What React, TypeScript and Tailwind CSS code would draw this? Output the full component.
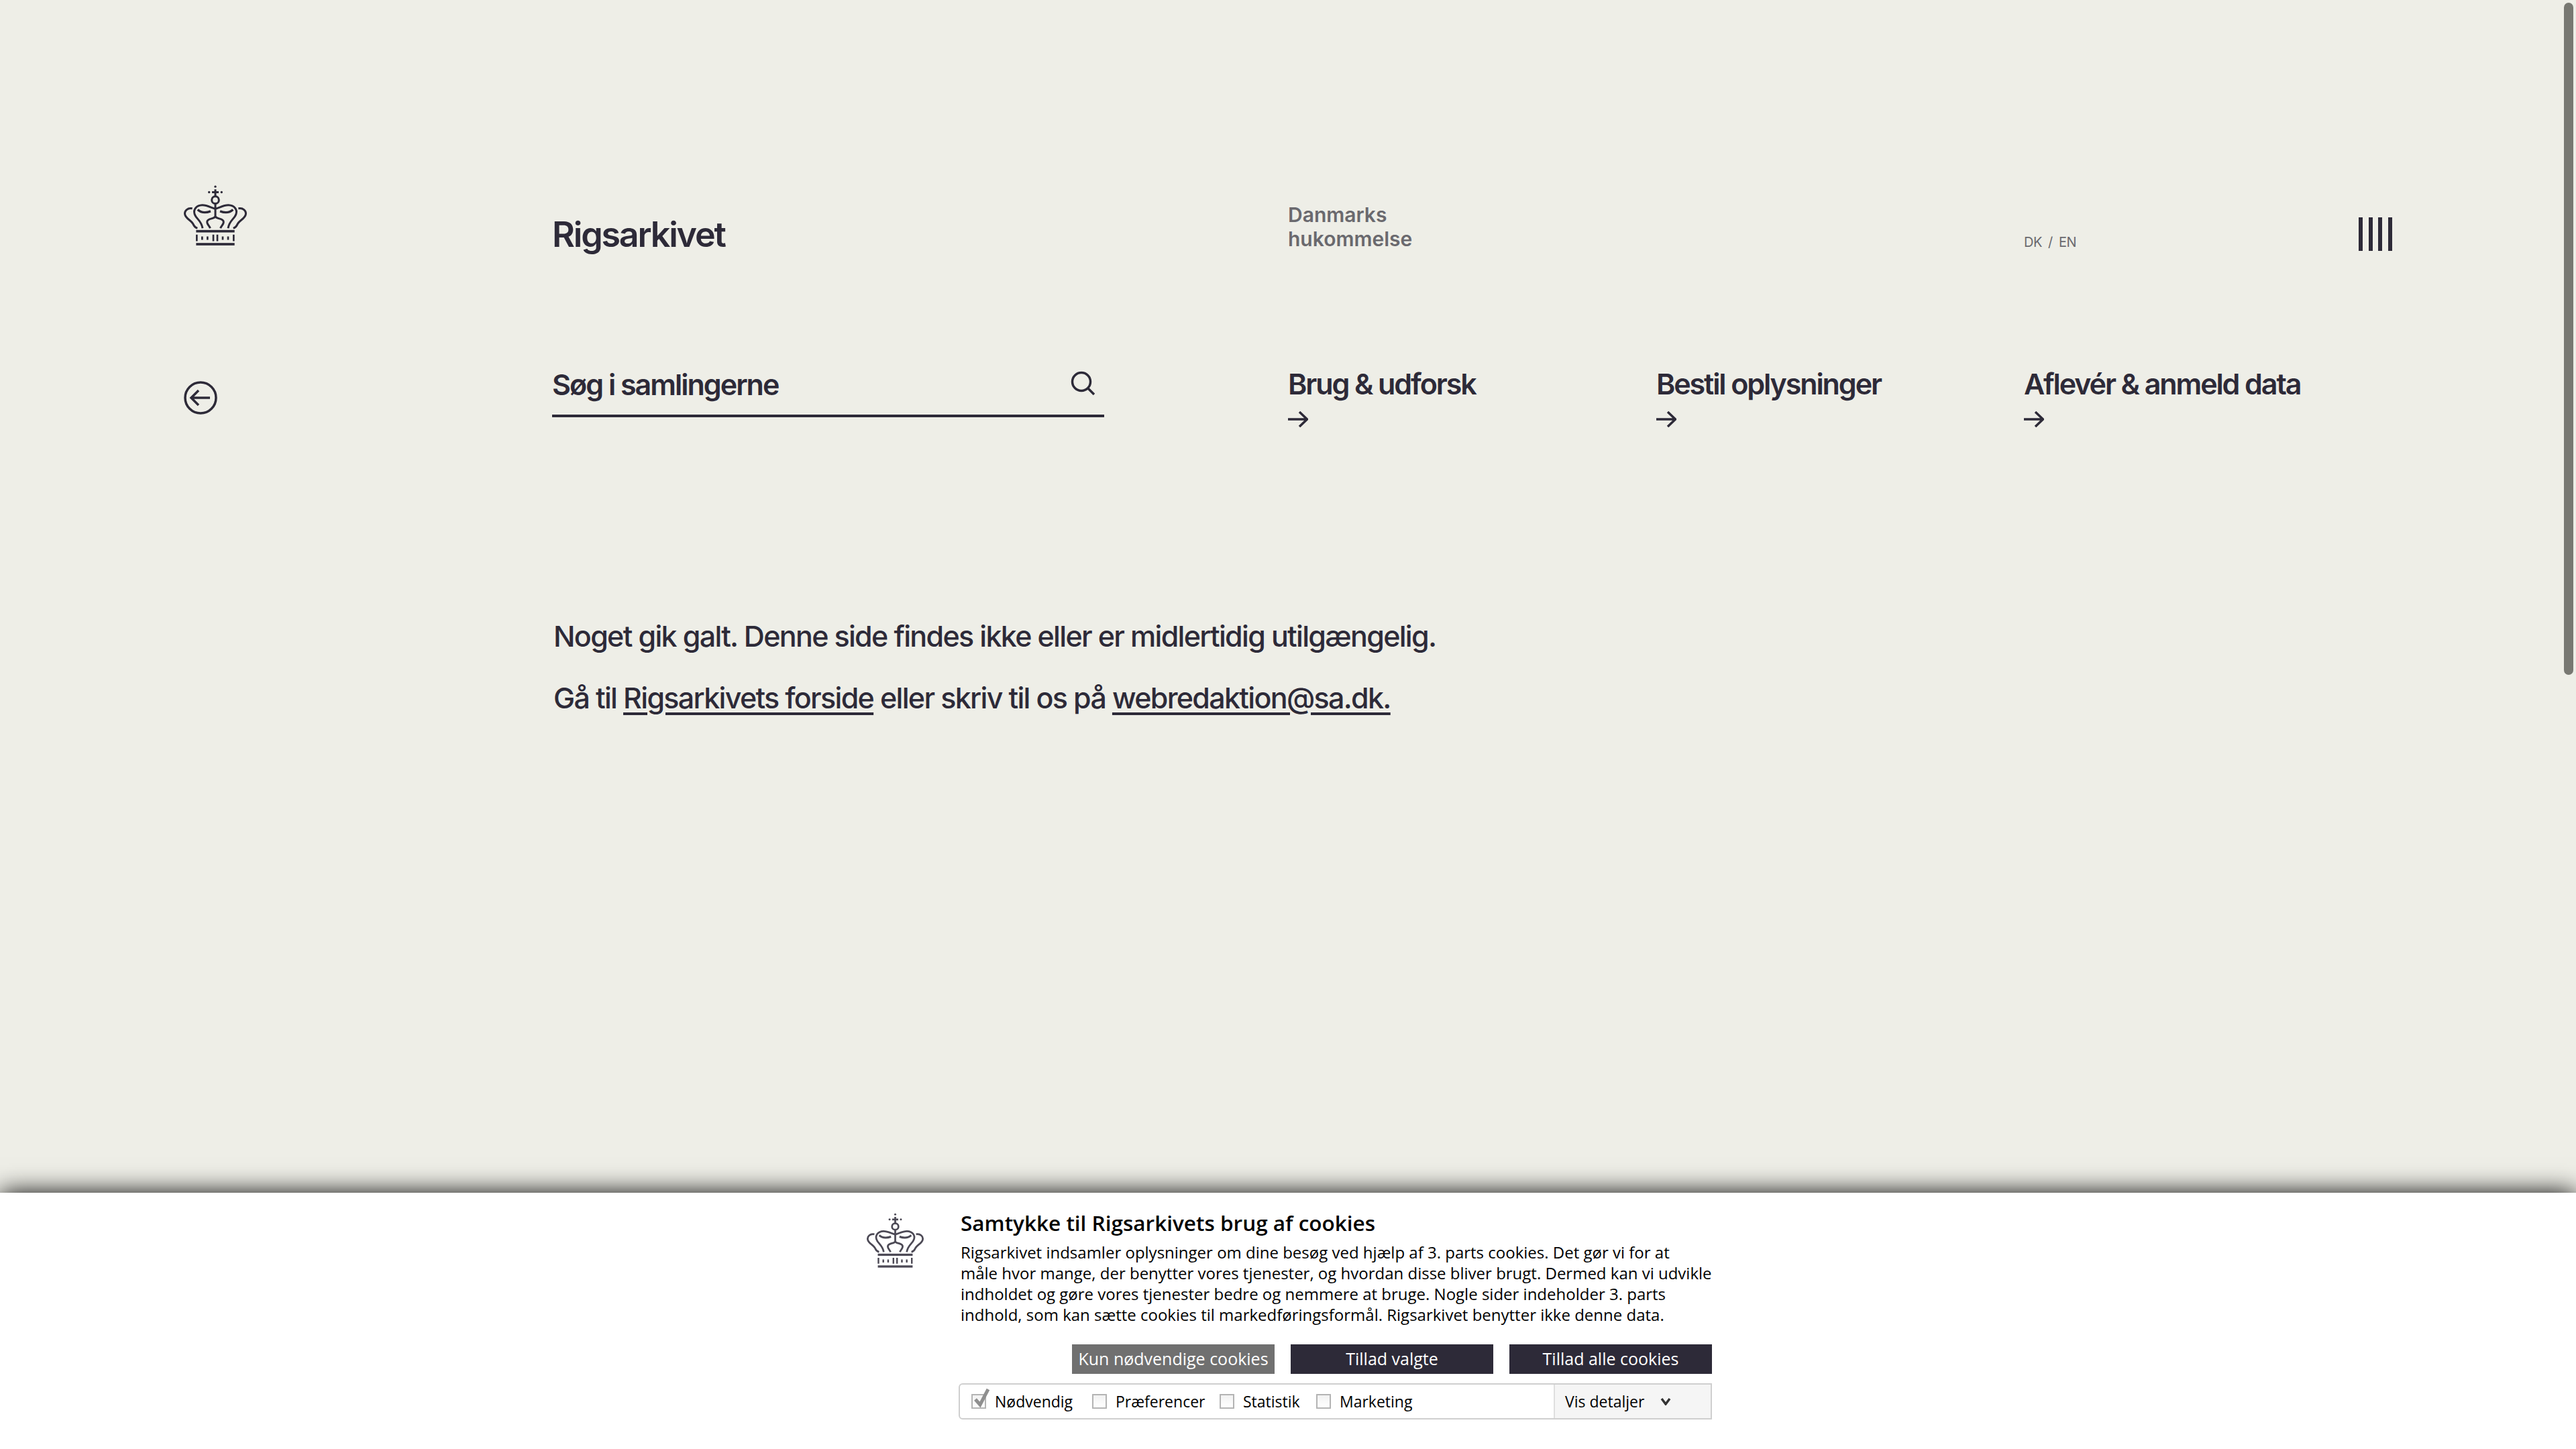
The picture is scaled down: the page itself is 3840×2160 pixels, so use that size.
import React from "react";

function Crown({ className }: { className: string }) {
  const arch = "M183 153 C165 150 148 136 124 137 C98 138 84 156 90 176 C96 198 120 204 126 240";
  const side = "M80 152 C60 148 44 162 47 178 C50 198 76 204 84 222 C88 232 96 238 103 240";
  const club = "M183 188 C176 200 154 194 147 208 C142 220 156 228 160 240";
  return (
    <svg viewBox="42 48 282 272" className={className} fill="none" stroke="currentColor" strokeWidth="9">
      <circle cx="183" cy="54" r="5" fill="currentColor" stroke="none" />
      <circle cx="155" cy="79" r="5" fill="currentColor" stroke="none" />
      <circle cx="211" cy="79" r="5" fill="currentColor" stroke="none" />
      <path d="M183 66V98M168 79H198M183 130V190" />
      <circle cx="183" cy="114" r="16" />
      <path d={arch} />
      <path d={side} />
      <path d={club} />
      <g transform="translate(366 0) scale(-1 1)">
        <path d={arch} />
        <path d={side} />
        <path d={club} />
      </g>
      <path d="M104 157 C118 170 140 172 162 164M262 157 C248 170 226 172 204 164" strokeWidth="10" />
      <rect x="97" y="248" width="172" height="11" fill="currentColor" stroke="none" />
      <rect x="97" y="306" width="172" height="11" fill="currentColor" stroke="none" />
      <path
        d="M100 269V298M124 277V292M148 277V292M174 269V298M192 269V298M216 277V292M240 277V292M265 269V298"
        strokeWidth="8"
      />
    </svg>
  );
}

function NavArrow() {
  return (
    <svg viewBox="0 0 30 24" className="mt-[17px] h-6 w-[30px]" fill="none" stroke="currentColor" strokeWidth="3.5">
      <path d="M0 12H28M17 1L28.5 12L17 23" />
    </svg>
  );
}

function NavLink({ label }: { label: string }) {
  return (
    <a className="flex flex-col items-start text-[43px] leading-[48px] font-semibold tracking-[-2.1px]">
      {label}
      <NavArrow />
    </a>
  );
}

function Box({ checked }: { checked?: boolean }) {
  return (
    <span className="relative h-[22px] w-[22px] shrink-0 border-2 border-[#b4b4b4] bg-gradient-to-b from-[#f2f2f2] to-white">
      {checked && (
        <svg viewBox="0 0 26 30" className="absolute top-[-11px] left-[-2px] h-[30px] w-[28px]" fill="none">
          <path d="M5 17L12 25L24 2" stroke="#8f8f8f" strokeWidth="5" />
        </svg>
      )}
    </span>
  );
}

function Consent({ label, checked, className }: { label: string; checked?: boolean; className: string }) {
  return (
    <label className={`flex items-center gap-[13px] ${className}`}>
      <Box checked={checked} />
      {label}
    </label>
  );
}

export default function App() {
  return (
    <div className="relative flex h-screen w-full flex-col overflow-hidden bg-[#eeeee7] font-['Inter',sans-serif] text-[#2d2a38]">
      <header className="grid grid-cols-[549px_549px_548px_549px_548px_549px] items-end pt-[276px] pl-[274px]">
        <Crown className="h-[91px] w-[94px] text-[#2d2a38]" />
        <a className="mb-[-13px] text-[52px] leading-[60px] font-semibold tracking-[-2.2px]">Rigsarkivet</a>
        <span />
        <p className="mb-[-7px] text-[30px] leading-[36px] font-semibold text-[#6a696e]">
          Danmarks
          <br />
          hukommelse
        </p>
        <span />
        <div className="mb-[-8px] flex items-end justify-between">
          <p className="mb-[-4px] flex gap-[9px] text-[20px] leading-[36px] tracking-[-0.4px] text-[#6a696e]">
            <span>DK</span>
            <span>/</span>
            <span>EN</span>
          </p>
          <button className="mb-[1px] flex h-[50px] w-[50px] justify-between">
            <span className="h-full w-[6px] bg-[#2d2a38]" />
            <span className="h-full w-[6px] bg-[#2d2a38]" />
            <span className="h-full w-[6px] bg-[#2d2a38]" />
            <span className="h-full w-[6px] bg-[#2d2a38]" />
          </button>
        </div>
      </header>

      <nav className="mt-[181px] grid grid-cols-[549px_1097px_549px_548px_1fr] items-start pl-[274px]">
        <svg viewBox="0 0 50 50" className="mt-[20px] h-[50px] w-[50px]" fill="none" stroke="currentColor" strokeWidth="3.5">
          <circle cx="25" cy="25" r="23" />
          <path d="M39 25H12M22 14L11 25L22 36" />
        </svg>
        <div className="flex h-[74px] w-[823px] items-start justify-between border-b-4 border-[#2d2a38]">
          <span className="mt-[-5px] text-[43px] leading-[60px] font-semibold tracking-[-2px]">Søg i samlingerne</span>
          <svg viewBox="0 0 36 36" className="mt-[5px] mr-[14px] h-9 w-9" fill="none" stroke="currentColor" strokeWidth="3.5">
            <circle cx="16" cy="16" r="13.5" />
            <path d="M26 26L35 35" />
          </svg>
        </div>
        <NavLink label="Brug & udforsk" />
        <NavLink label="Bestil oplysninger" />
        <NavLink label="Aflevér & anmeld data" />
      </nav>

      <main className="mt-[265px] pl-[825px] text-[43px] leading-[92px] font-medium tracking-[-1.68px]">
        <p>Noget gik galt. Denne side findes ikke eller er midlertidig utilgængelig.</p>
        <p>
          Gå til <a className="underline decoration-4 underline-offset-[6px]">Rigsarkivets forside</a> eller skriv til os på{" "}
          <a className="underline decoration-4 underline-offset-[6px]">webredaktion@sa.dk.</a>
        </p>
      </main>

      <section className="mt-auto flex h-[382px] items-start justify-center bg-white pl-[4px] font-['Open_Sans',sans-serif] text-black shadow-[0_0_36px_#000]">
        <Crown className="mt-[30px] mr-[52px] h-[83px] w-[85px] text-[#2d2a38] opacity-85" />
        <div className="w-[1123px] pt-[26px]">
          <div className="pl-[3px]">
            <h1 className="text-[31.5px] leading-[38px] font-semibold">Samtykke til Rigsarkivets brug af cookies</h1>
            <p className="mt-[9px] text-[24px] leading-[31px]">
              Rigsarkivet indsamler oplysninger om dine besøg ved hjælp af 3. parts cookies. Det gør vi for at
              <br />
              måle hvor mange, der benytter vores tjenester, og hvordan disse bliver brugt. Dermed kan vi udvikle
              <br />
              indholdet og gøre vores tjenester bedre og nemmere at bruge. Nogle sider indeholder 3. parts
              <br />
              indhold, som kan sætte cookies til markedføringsformål. Rigsarkivet benytter ikke denne data.
            </p>
          </div>
          <div className="mt-[29px] flex justify-end gap-[24px] text-[25px] text-white">
            <button className="flex h-[44px] w-[302px] items-center justify-center bg-[#707070]">Kun nødvendige cookies</button>
            <button className="flex h-[44px] w-[302px] items-center justify-center bg-[#2d2a38]">Tillad valgte</button>
            <button className="flex h-[44px] w-[302px] items-center justify-center bg-[#2d2a38]">Tillad alle cookies</button>
          </div>
          <div className="mt-[14px] flex h-[54px] items-stretch rounded-l-[6px] border-2 border-[#cfcfcf] text-[23px]">
            <div className="flex flex-1 items-center pl-[17px]">
              <Consent label="Nødvendig" checked className="w-[180px]" />
              <Consent label="Præferencer" className="w-[190px]" />
              <Consent label="Statistik" className="w-[144px]" />
              <Consent label="Marketing" className="w-auto" />
            </div>
            <button className="flex w-[234px] items-center border-l-2 border-[#dfdfdf] bg-[#f5f5f5] pl-[15px]">
              Vis detaljer
              <svg viewBox="0 0 16 12" className="ml-[24px] h-3 w-4" fill="none" stroke="#333" strokeWidth="3.5">
                <path d="M2 2L8 10L14 2" />
              </svg>
            </button>
          </div>
        </div>
      </section>

      <div className="absolute top-[4px] right-[4px] h-[1002px] w-[14px] rounded-full bg-[#787872]" />
    </div>
  );
}
